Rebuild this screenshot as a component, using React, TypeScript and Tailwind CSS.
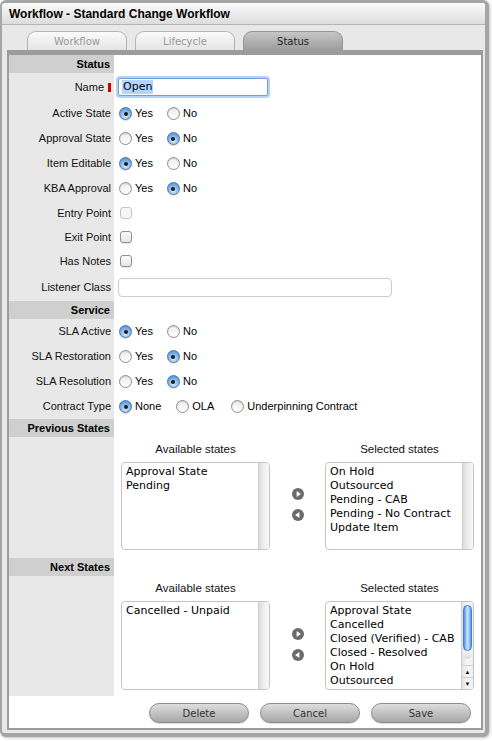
import React from "react";

const Radio = ({ checked }: { checked?: boolean }) =>
  checked ? (
    <span className="inline-flex h-[13px] w-[13px] shrink-0 items-center justify-center rounded-full border border-[#4d77a6] bg-[radial-gradient(circle_at_50%_75%,#d6ebfd_0%,#8cbcee_45%,#3d86d4_100%)] shadow-[0_1px_1px_rgba(0,0,0,0.15)]">
      <span className="h-[4px] w-[4px] rounded-full bg-[#1b1b1b]" />
    </span>
  ) : (
    <span className="inline-block h-[13px] w-[13px] shrink-0 rounded-full border border-[#8e8e8e] bg-linear-to-b from-[#ececec] to-[#ffffff] shadow-[inset_0_1px_1px_rgba(0,0,0,0.12)]" />
  );

const Opt = ({ label, checked, className }: { label: string; checked?: boolean; className?: string }) => (
  <span className={"flex items-center gap-[3px] " + (className ?? "")}>
    <Radio checked={checked} />
    <span className="text-[11px] leading-[13px]">{label}</span>
  </span>
);

const Checkbox = ({ disabled }: { disabled?: boolean }) => (
  <span
    className={
      disabled
        ? "inline-block h-[12px] w-[12px] rounded-[3px] border border-[#c6c6c6] bg-[#f6f6f6]"
        : "inline-block h-[12px] w-[12px] rounded-[3px] border border-[#8f8f8f] bg-linear-to-b from-[#fdfdfd] to-[#e6e6e6] shadow-[0_1px_1px_rgba(0,0,0,0.1)]"
    }
  />
);

const Header = ({ label }: { label: string }) => (
  <div className="flex h-[18px]">
    <div className="w-[105px] shrink-0 bg-[#cfcfcf] pr-[4px] text-right text-[11px] font-bold leading-[18px]">{label}</div>
    <div className="flex-1 bg-white" />
  </div>
);

const Row = ({
  label,
  h,
  required,
  pl,
  children,
}: {
  label: string;
  h: string;
  required?: boolean;
  pl?: string;
  children?: React.ReactNode;
}) => (
  <div className={"flex " + h}>
    <div className="flex w-[105px] shrink-0 items-center justify-end gap-[4px] bg-[#e8e8e8] pr-[3px] text-[11px] text-[#111]">
      <span>{label}</span>
      {required && <span className="h-[9px] w-[3px] bg-[#cc0000]" />}
    </div>
    <div className={"flex flex-1 items-center bg-white " + (pl ?? "pl-[5px]")}>{children}</div>
  </div>
);

const YesNo = ({ yes }: { yes: boolean }) => (
  <div className="flex items-center gap-[14px]">
    <Opt label="Yes" checked={yes} />
    <Opt label="No" checked={!yes} />
  </div>
);

const ArrowBtn = ({ dir }: { dir: "r" | "l" }) => (
  <svg width="12" height="12" viewBox="0 0 12 12">
    <circle cx="6" cy="6" r="6" fill="#6b6b6b" />
    {dir === "r" ? <path d="M4.6 3.1 L8.9 6 L4.6 8.9Z" fill="#fff" /> : <path d="M7.4 3.1 L3.1 6 L7.4 8.9Z" fill="#fff" />}
  </svg>
);

const ListBox = ({ items, h, active }: { items: string[]; h: string; active?: boolean }) => (
  <div className={"flex w-[149px] overflow-hidden rounded-[4px] border border-[#c4c4c4] bg-white " + h}>
    <div className="flex-1 overflow-hidden whitespace-nowrap pl-[4px] pt-[2px] font-['DejaVu_Sans',sans-serif] text-[11px] leading-[14px] text-black">
      {items.map((it) => (
        <div key={it}>{it}</div>
      ))}
    </div>
    {active ? (
      <div className="flex w-[12px] flex-col border-l border-[#cfcfcf] bg-linear-to-r from-[#e4e4e4] via-[#f6f6f6] to-[#f0f0f0]">
        <div className="mx-[1px] mt-[3px] h-[46px] rounded-full border border-[#3d7fcf] bg-linear-to-r from-[#4b8fe0] via-[#cfe6fc] to-[#5b9ce4]" />
        <div className="mx-[1px] h-[8px] rounded-b-full bg-linear-to-b from-[#f4f4f4] to-[#dcdcdc]" />
        <div className="flex-1" />
        <div className="flex h-[12px] items-center justify-center border-t border-[#d0d0d0] text-[6px] leading-none text-[#111]">▲</div>
        <div className="flex h-[12px] items-center justify-center border-t border-[#d0d0d0] text-[6px] leading-none text-[#111]">▼</div>
      </div>
    ) : (
      <div className="w-[11px] border-l border-[#cdcdcd] bg-linear-to-r from-[#dcdcdc] via-[#efefef] to-[#f7f7f7]" />
    )}
  </div>
);

const StatesBlock = ({
  avail,
  selected,
  h,
  boxH,
  active,
}: {
  avail: string[];
  selected: string[];
  h: string;
  boxH: string;
  active?: boolean;
}) => (
  <div className={"flex " + h}>
    <div className="w-[105px] shrink-0 bg-[#e8e8e8]" />
    <div className="flex-1 bg-white px-[7px] pt-[6px]">
      <div className="flex text-[11.5px] leading-[13px] text-[#111]">
        <div className="w-[149px] text-center">Available states</div>
        <div className="w-[55px]" />
        <div className="w-[149px] text-center">Selected states</div>
      </div>
      <div className="mt-[6px] flex">
        <ListBox items={avail} h={boxH} />
        <div className="flex w-[55px] flex-col items-center justify-center gap-[9px] pb-[3px]">
          <ArrowBtn dir="r" />
          <ArrowBtn dir="l" />
        </div>
        <ListBox items={selected} h={boxH} active={active} />
      </div>
    </div>
  </div>
);

const Tab = ({ label, active }: { label: string; active?: boolean }) => (
  <div
    className={
      active
        ? "flex h-[19px] w-[100px] items-center justify-center rounded-t-[9px] border border-b-0 border-[#959595] bg-linear-to-b from-[#c6c6c6] to-[#9d9d9d] font-['DejaVu_Sans',sans-serif] text-[10px] text-[#222]"
        : "flex h-[19px] w-[100px] items-center justify-center rounded-t-[9px] border border-b-0 border-[#b4b4b4] bg-linear-to-b from-[#fbfbfb] to-[#e4e4e4] font-['DejaVu_Sans',sans-serif] text-[10px] text-[#999]"
    }
  >
    {label}
  </div>
);

export default function App() {
  return (
    <div className="h-[741px] w-[492px] bg-white font-['Liberation_Sans',Arial,sans-serif] text-black">
      <div className="flex h-[737px] w-[489px] flex-col overflow-hidden rounded-[6px] border-b-[4px] border-l-[2px] border-r-[4px] border-t-[3px] border-[#a5a5a5] bg-[#e8e8e8] shadow-[1px_1px_3px_rgba(0,0,0,0.25)]">
        <div className="flex h-[22px] shrink-0 items-center border-b border-[#b5b5b5] bg-linear-to-b from-[#fbfbfb] to-[#dcdcdc] pl-[7px] text-[12px] font-bold">
          Workflow - Standard Change Workflow
        </div>
        <div className="flex h-[25px] shrink-0 items-end gap-[8px] pl-[25px]">
          <Tab label="Workflow" />
          <Tab label="Lifecycle" />
          <Tab label="Status" active />
        </div>
        <div className="ml-[5px] mr-[2px] flex flex-col border-x-2 border-b-2 border-t-[5px] border-[#9c9c9c] bg-white">
          <Header label="Status" />
          <Row label="Name" h="h-[28px]" required pl="pl-[4px]">
            <div className="flex h-[18px] w-[150px] items-center rounded-[2px] border border-[#6f9fd6] bg-white pl-[3px] font-['DejaVu_Sans',sans-serif] text-[11px] shadow-[0_0_0_2px_rgba(125,173,229,0.55)]">
              <span className="bg-[#b5d5ff] px-[1px] leading-[14px]">Open</span>
            </div>
          </Row>
          <Row label="Active State" h="h-[25px]">
            <YesNo yes />
          </Row>
          <Row label="Approval State" h="h-[25px]">
            <YesNo yes={false} />
          </Row>
          <Row label="Item Editable" h="h-[25px]">
            <YesNo yes />
          </Row>
          <Row label="KBA Approval" h="h-[25px]">
            <YesNo yes={false} />
          </Row>
          <Row label="Entry Point" h="h-[24px]" pl="pl-[6px]">
            <Checkbox disabled />
          </Row>
          <Row label="Exit Point" h="h-[24px]" pl="pl-[6px]">
            <Checkbox />
          </Row>
          <Row label="Has Notes" h="h-[24px]" pl="pl-[6px]">
            <Checkbox />
          </Row>
          <Row label="Listener Class" h="h-[28px]" pl="pl-[4px]">
            <div className="h-[19px] w-[274px] rounded-[4px] border border-[#cbcbcb] bg-white" />
          </Row>
          <Header label="Service" />
          <Row label="SLA Active" h="h-[25px]">
            <YesNo yes />
          </Row>
          <Row label="SLA Restoration" h="h-[25px]">
            <YesNo yes={false} />
          </Row>
          <Row label="SLA Resolution" h="h-[25px]">
            <YesNo yes={false} />
          </Row>
          <Row label="Contract Type" h="h-[25px]">
            <div className="flex items-center">
              <Opt label="None" checked className="mr-[15px]" />
              <Opt label="OLA" className="mr-[17px]" />
              <Opt label="Underpinning Contract" />
            </div>
          </Row>
          <Header label="Previous States" />
          <StatesBlock
            h="h-[121px]"
            boxH="h-[88px]"
            avail={["Approval State", "Pending"]}
            selected={["On Hold", "Outsourced", "Pending - CAB", "Pending - No Contract", "Update Item"]}
          />
          <Header label="Next States" />
          <StatesBlock
            h="h-[120px]"
            boxH="h-[89px]"
            active
            avail={["Cancelled - Unpaid"]}
            selected={[
              "Approval State",
              "Cancelled",
              "Closed (Verified) - CAB",
              "Closed - Resolved",
              "On Hold",
              "Outsourced",
            ]}
          />
          <div className="flex h-[32px] items-start justify-end gap-[11px] pr-[10px] pt-[7px]">
            {["Delete", "Cancel", "Save"].map((b) => (
              <div
                key={b}
                className="flex h-[20px] w-[100px] items-center justify-center rounded-full border border-[#8d8d8d] bg-linear-to-b from-[#dedede] to-[#a7a7a7] font-['DejaVu_Sans',sans-serif] text-[10px] text-[#333] shadow-[0_1px_1px_rgba(0,0,0,0.15)]"
              >
                {b}
              </div>
            ))}
          </div>
        </div>
      </div>
    </div>
  );
}
